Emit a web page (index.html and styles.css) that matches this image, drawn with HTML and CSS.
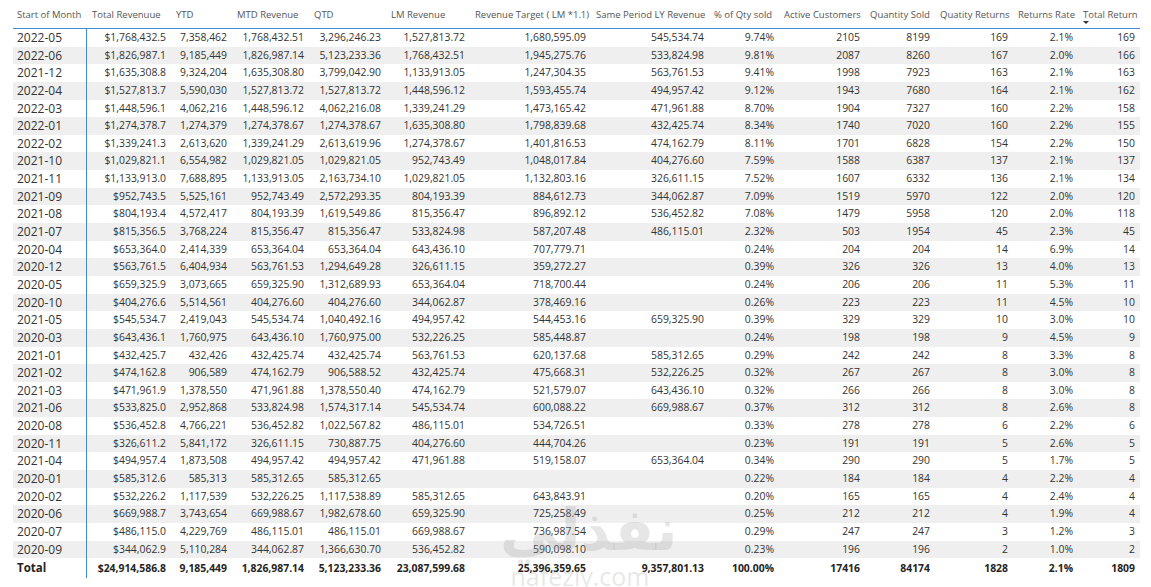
FILE: index.html
```html
<!DOCTYPE html>
<html lang="en">
<head>
<meta charset="utf-8">
<title>Revenue matrix</title>
<link rel="stylesheet" href="styles.css">
</head>
<body>
<div class="page">
  <div class="matrix">
    <div class="row head">
      <div>Start of Month</div><div>Total Revenuue</div><div>YTD</div><div>MTD Revenue</div><div>QTD</div><div>LM Revenue</div><div>Revenue Target ( LM *1.1)</div><div>Same Period LY Revenue</div><div>% of Qty sold</div><div>Active Customers</div><div>Quantity Sold</div><div>Quatity Returns</div><div>Returns Rate</div><div class="sorted">Total Return</div>
    </div>
    <div class="row"><div>2022-05</div><div>$1,768,432.5</div><div>7,358,462</div><div>1,768,432.51</div><div>3,296,246.23</div><div>1,527,813.72</div><div>1,680,595.09</div><div>545,534.74</div><div>9.74%</div><div>2105</div><div>8199</div><div>169</div><div>2.1%</div><div>169</div></div>
    <div class="row"><div>2022-06</div><div>$1,826,987.1</div><div>9,185,449</div><div>1,826,987.14</div><div>5,123,233.36</div><div>1,768,432.51</div><div>1,945,275.76</div><div>533,824.98</div><div>9.81%</div><div>2087</div><div>8260</div><div>167</div><div>2.0%</div><div>166</div></div>
    <div class="row"><div>2021-12</div><div>$1,635,308.8</div><div>9,324,204</div><div>1,635,308.80</div><div>3,799,042.90</div><div>1,133,913.05</div><div>1,247,304.35</div><div>563,761.53</div><div>9.41%</div><div>1998</div><div>7923</div><div>163</div><div>2.1%</div><div>163</div></div>
    <div class="row"><div>2022-04</div><div>$1,527,813.7</div><div>5,590,030</div><div>1,527,813.72</div><div>1,527,813.72</div><div>1,448,596.12</div><div>1,593,455.74</div><div>494,957.42</div><div>9.12%</div><div>1943</div><div>7680</div><div>164</div><div>2.1%</div><div>162</div></div>
    <div class="row"><div>2022-03</div><div>$1,448,596.1</div><div>4,062,216</div><div>1,448,596.12</div><div>4,062,216.08</div><div>1,339,241.29</div><div>1,473,165.42</div><div>471,961.88</div><div>8.70%</div><div>1904</div><div>7327</div><div>160</div><div>2.2%</div><div>158</div></div>
    <div class="row"><div>2022-01</div><div>$1,274,378.7</div><div>1,274,379</div><div>1,274,378.67</div><div>1,274,378.67</div><div>1,635,308.80</div><div>1,798,839.68</div><div>432,425.74</div><div>8.34%</div><div>1740</div><div>7020</div><div>160</div><div>2.2%</div><div>155</div></div>
    <div class="row"><div>2022-02</div><div>$1,339,241.3</div><div>2,613,620</div><div>1,339,241.29</div><div>2,613,619.96</div><div>1,274,378.67</div><div>1,401,816.53</div><div>474,162.79</div><div>8.11%</div><div>1701</div><div>6828</div><div>154</div><div>2.2%</div><div>150</div></div>
    <div class="row"><div>2021-10</div><div>$1,029,821.1</div><div>6,554,982</div><div>1,029,821.05</div><div>1,029,821.05</div><div>952,743.49</div><div>1,048,017.84</div><div>404,276.60</div><div>7.59%</div><div>1588</div><div>6387</div><div>137</div><div>2.1%</div><div>137</div></div>
    <div class="row"><div>2021-11</div><div>$1,133,913.0</div><div>7,688,895</div><div>1,133,913.05</div><div>2,163,734.10</div><div>1,029,821.05</div><div>1,132,803.16</div><div>326,611.15</div><div>7.52%</div><div>1607</div><div>6332</div><div>136</div><div>2.1%</div><div>134</div></div>
    <div class="row"><div>2021-09</div><div>$952,743.5</div><div>5,525,161</div><div>952,743.49</div><div>2,572,293.35</div><div>804,193.39</div><div>884,612.73</div><div>344,062.87</div><div>7.09%</div><div>1519</div><div>5970</div><div>122</div><div>2.0%</div><div>120</div></div>
    <div class="row"><div>2021-08</div><div>$804,193.4</div><div>4,572,417</div><div>804,193.39</div><div>1,619,549.86</div><div>815,356.47</div><div>896,892.12</div><div>536,452.82</div><div>7.08%</div><div>1479</div><div>5958</div><div>120</div><div>2.0%</div><div>118</div></div>
    <div class="row"><div>2021-07</div><div>$815,356.5</div><div>3,768,224</div><div>815,356.47</div><div>815,356.47</div><div>533,824.98</div><div>587,207.48</div><div>486,115.01</div><div>2.32%</div><div>503</div><div>1954</div><div>45</div><div>2.3%</div><div>45</div></div>
    <div class="row"><div>2020-04</div><div>$653,364.0</div><div>2,414,339</div><div>653,364.04</div><div>653,364.04</div><div>643,436.10</div><div>707,779.71</div><div></div><div>0.24%</div><div>204</div><div>204</div><div>14</div><div>6.9%</div><div>14</div></div>
    <div class="row"><div>2020-12</div><div>$563,761.5</div><div>6,404,934</div><div>563,761.53</div><div>1,294,649.28</div><div>326,611.15</div><div>359,272.27</div><div></div><div>0.39%</div><div>326</div><div>326</div><div>13</div><div>4.0%</div><div>13</div></div>
    <div class="row"><div>2020-05</div><div>$659,325.9</div><div>3,073,665</div><div>659,325.90</div><div>1,312,689.93</div><div>653,364.04</div><div>718,700.44</div><div></div><div>0.24%</div><div>206</div><div>206</div><div>11</div><div>5.3%</div><div>11</div></div>
    <div class="row"><div>2020-10</div><div>$404,276.6</div><div>5,514,561</div><div>404,276.60</div><div>404,276.60</div><div>344,062.87</div><div>378,469.16</div><div></div><div>0.26%</div><div>223</div><div>223</div><div>11</div><div>4.5%</div><div>10</div></div>
    <div class="row"><div>2021-05</div><div>$545,534.7</div><div>2,419,043</div><div>545,534.74</div><div>1,040,492.16</div><div>494,957.42</div><div>544,453.16</div><div>659,325.90</div><div>0.39%</div><div>329</div><div>329</div><div>10</div><div>3.0%</div><div>10</div></div>
    <div class="row"><div>2020-03</div><div>$643,436.1</div><div>1,760,975</div><div>643,436.10</div><div>1,760,975.00</div><div>532,226.25</div><div>585,448.87</div><div></div><div>0.24%</div><div>198</div><div>198</div><div>9</div><div>4.5%</div><div>9</div></div>
    <div class="row"><div>2021-01</div><div>$432,425.7</div><div>432,426</div><div>432,425.74</div><div>432,425.74</div><div>563,761.53</div><div>620,137.68</div><div>585,312.65</div><div>0.29%</div><div>242</div><div>242</div><div>8</div><div>3.3%</div><div>8</div></div>
    <div class="row"><div>2021-02</div><div>$474,162.8</div><div>906,589</div><div>474,162.79</div><div>906,588.52</div><div>432,425.74</div><div>475,668.31</div><div>532,226.25</div><div>0.32%</div><div>267</div><div>267</div><div>8</div><div>3.0%</div><div>8</div></div>
    <div class="row"><div>2021-03</div><div>$471,961.9</div><div>1,378,550</div><div>471,961.88</div><div>1,378,550.40</div><div>474,162.79</div><div>521,579.07</div><div>643,436.10</div><div>0.32%</div><div>266</div><div>266</div><div>8</div><div>3.0%</div><div>8</div></div>
    <div class="row"><div>2021-06</div><div>$533,825.0</div><div>2,952,868</div><div>533,824.98</div><div>1,574,317.14</div><div>545,534.74</div><div>600,088.22</div><div>669,988.67</div><div>0.37%</div><div>312</div><div>312</div><div>8</div><div>2.6%</div><div>8</div></div>
    <div class="row"><div>2020-08</div><div>$536,452.8</div><div>4,766,221</div><div>536,452.82</div><div>1,022,567.82</div><div>486,115.01</div><div>534,726.51</div><div></div><div>0.33%</div><div>278</div><div>278</div><div>6</div><div>2.2%</div><div>6</div></div>
    <div class="row"><div>2020-11</div><div>$326,611.2</div><div>5,841,172</div><div>326,611.15</div><div>730,887.75</div><div>404,276.60</div><div>444,704.26</div><div></div><div>0.23%</div><div>191</div><div>191</div><div>5</div><div>2.6%</div><div>5</div></div>
    <div class="row"><div>2021-04</div><div>$494,957.4</div><div>1,873,508</div><div>494,957.42</div><div>494,957.42</div><div>471,961.88</div><div>519,158.07</div><div>653,364.04</div><div>0.34%</div><div>290</div><div>290</div><div>5</div><div>1.7%</div><div>5</div></div>
    <div class="row"><div>2020-01</div><div>$585,312.6</div><div>585,313</div><div>585,312.65</div><div>585,312.65</div><div></div><div></div><div></div><div>0.22%</div><div>184</div><div>184</div><div>4</div><div>2.2%</div><div>4</div></div>
    <div class="row"><div>2020-02</div><div>$532,226.2</div><div>1,117,539</div><div>532,226.25</div><div>1,117,538.89</div><div>585,312.65</div><div>643,843.91</div><div></div><div>0.20%</div><div>165</div><div>165</div><div>4</div><div>2.4%</div><div>4</div></div>
    <div class="row"><div>2020-06</div><div>$669,988.7</div><div>3,743,654</div><div>669,988.67</div><div>1,982,678.60</div><div>659,325.90</div><div>725,258.49</div><div></div><div>0.25%</div><div>212</div><div>212</div><div>4</div><div>1.9%</div><div>4</div></div>
    <div class="row"><div>2020-07</div><div>$486,115.0</div><div>4,229,769</div><div>486,115.01</div><div>486,115.01</div><div>669,988.67</div><div>736,987.54</div><div></div><div>0.29%</div><div>247</div><div>247</div><div>3</div><div>1.2%</div><div>3</div></div>
    <div class="row"><div>2020-09</div><div>$344,062.9</div><div>5,110,284</div><div>344,062.87</div><div>1,366,630.70</div><div>536,452.82</div><div>590,098.10</div><div></div><div>0.23%</div><div>196</div><div>196</div><div>2</div><div>1.0%</div><div>2</div></div>
    <div class="row total"><div>Total</div><div>$24,914,586.8</div><div>9,185,449</div><div>1,826,987.14</div><div>5,123,233.36</div><div>23,087,599.68</div><div>25,396,359.65</div><div>9,357,801.13</div><div>100.00%</div><div>17416</div><div>84174</div><div>1828</div><div>2.1%</div><div>1809</div></div>
  </div>
  <div class="watermark">
    <div class="wm-ar">نفذلي</div>
    <div class="wm-en">nafezly.com</div>
  </div>
</div>
</body>
</html>
```

FILE: styles.css
```css
html, body {
  margin: 0;
  padding: 0;
  background: #ffffff;
}

body {
  font-family: "Open Sans", "Liberation Sans", sans-serif;
  color: #333333;
}

.page {
  position: relative;
  width: 1151px;
  height: 587px;
  overflow: hidden;
  padding-left: 13px;
  box-sizing: border-box;
}

.matrix {
  width: 1127px;
}

.row {
  display: grid;
  grid-template-columns: 74px 84px 61px 77px 77px 84px 121px 118px 70px 86px 70px 78px 65px 62px;
  height: 17.65px;
  line-height: 17.65px;
  font-size: 10.4px;
  white-space: nowrap;
}

.row > div {
  text-align: right;
  padding-right: 5px;
  overflow: hidden;
}

.row > div:first-child {
  text-align: left;
  padding-left: 4px;
  padding-right: 0;
  font-size: 12px;
  border-right: 1px solid #3d8bd8;
}

.row:nth-child(odd) {
  background: #efefef;
}

.row.head {
  height: 28px;
  line-height: 30px;
  border-bottom: 1px solid #3d8bd8;
  background: #ffffff;
  font-size: 9.5px;
  color: #555555;
}

.row.head > div {
  text-align: left;
  padding-left: 5px;
  padding-right: 0;
  overflow: visible;
}

.row.head > div:first-child {
  padding-left: 4px;
  font-size: 9.5px;
  border-right: none;
}

.row.head > .sorted {
  position: relative;
}

.row.head > .sorted::after {
  content: "";
  position: absolute;
  left: 5px;
  top: 21px;
  border-left: 3px solid transparent;
  border-right: 3px solid transparent;
  border-top: 3px solid #333333;
}

.row.total {
  height: 20px;
  line-height: 20px;
  font-weight: 700;
  background: #ffffff;
  color: #252423;
}

.row.total > div:first-child {
  font-size: 11.5px;
}

.watermark {
  position: absolute;
  left: 500px;
  top: 500px;
  width: 160px;
  text-align: center;
  color: rgba(160, 160, 160, 0.26);
  pointer-events: none;
}

.wm-ar {
  font-family: "DejaVu Sans", sans-serif;
  font-weight: 700;
  font-size: 58px;
  line-height: 60px;
}

.wm-en {
  font-family: "Open Sans", sans-serif;
  font-size: 25px;
  line-height: 28px;
  margin-top: 2px;
}
```
